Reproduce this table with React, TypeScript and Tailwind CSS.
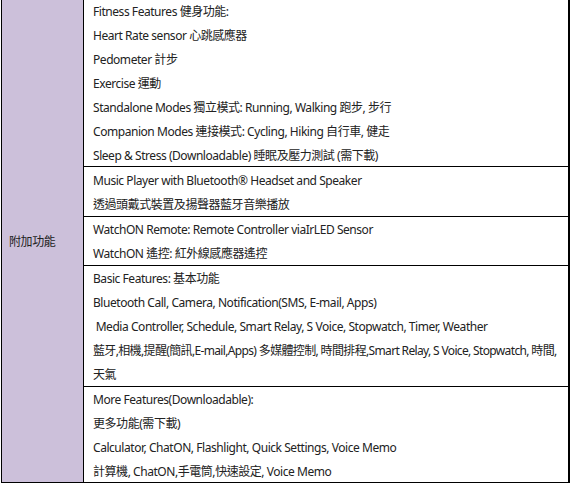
import React from "react";

const rows: { h: string; lines: string[] }[] = [
  {
    h: "h-[167px]",
    lines: [
      "Fitness Features 健身功能:",
      "Heart Rate sensor 心跳感應器",
      "Pedometer 計步",
      "Exercise 運動",
      "Standalone Modes 獨立模式: Running, Walking 跑步, 步行",
      "Companion Modes 連接模式: Cycling, Hiking 自行車, 健走",
      "Sleep & Stress (Downloadable) 睡眠及壓力測試 (需下載)",
    ],
  },
  {
    h: "h-[50px]",
    lines: ["Music Player with Bluetooth® Headset and Speaker", "透過頭戴式裝置及揚聲器藍牙音樂播放"],
  },
  {
    h: "h-[49px]",
    lines: ["WatchON Remote: Remote Controller viaIrLED Sensor", "WatchON 遙控: 紅外線感應器遙控"],
  },
  {
    h: "h-[121px]",
    lines: [
      "Basic Features: 基本功能",
      "Bluetooth Call, Camera, Notification(SMS, E-mail, Apps)",
      "\u00a0Media Controller, Schedule, Smart Relay, S Voice, Stopwatch, Timer, Weather",
      "藍牙,相機,提醒(簡訊,E-mail,Apps) 多媒體控制, 時間排程,Smart Relay, S Voice, Stopwatch, 時間,",
      "天氣",
    ],
  },
  {
    h: "h-[95px]",
    lines: [
      "More Features(Downloadable):",
      "更多功能(需下載)",
      "Calculator, ChatON, Flashlight, Quick Settings, Voice Memo",
      "計算機, ChatON,手電筒,快速設定, Voice Memo",
    ],
  },
];

export default function App() {
  return (
    <div
      className="w-[571px] h-[484px] bg-white pl-px text-[#222] text-[12px]"
      style={{ fontFamily: '"Noto Sans", "Noto Sans CJK TC", sans-serif' }}
    >
      <div className="flex w-[569px] border-l border-r-2 border-b border-black">
        <div className="w-[82px] shrink-0 bg-[#ccc0da] border-r border-black flex items-center pl-[7px] pt-[2px]">
          <span className="tracking-[-0.4px]">附加功能</span>
        </div>
        <div className="flex-1 min-w-0 flex flex-col">
          {rows.map((r, i) => (
            <div
              key={i}
              className={`${r.h} ${i < rows.length - 1 ? "border-b border-black" : ""} flex flex-col justify-center pl-[9px] overflow-hidden`}
            >
              {r.lines.map((l, j) => (
                <div
                  key={j}
                  className={`h-[24px] shrink-0 pt-[2px] leading-[22px] whitespace-nowrap ${
                    l.length > 70 && i === 3 && j === 3 ? "tracking-[-0.65px]" : "tracking-[-0.45px]"
                  }`}
                >
                  {l}
                </div>
              ))}
            </div>
          ))}
        </div>
      </div>
    </div>
  );
}
